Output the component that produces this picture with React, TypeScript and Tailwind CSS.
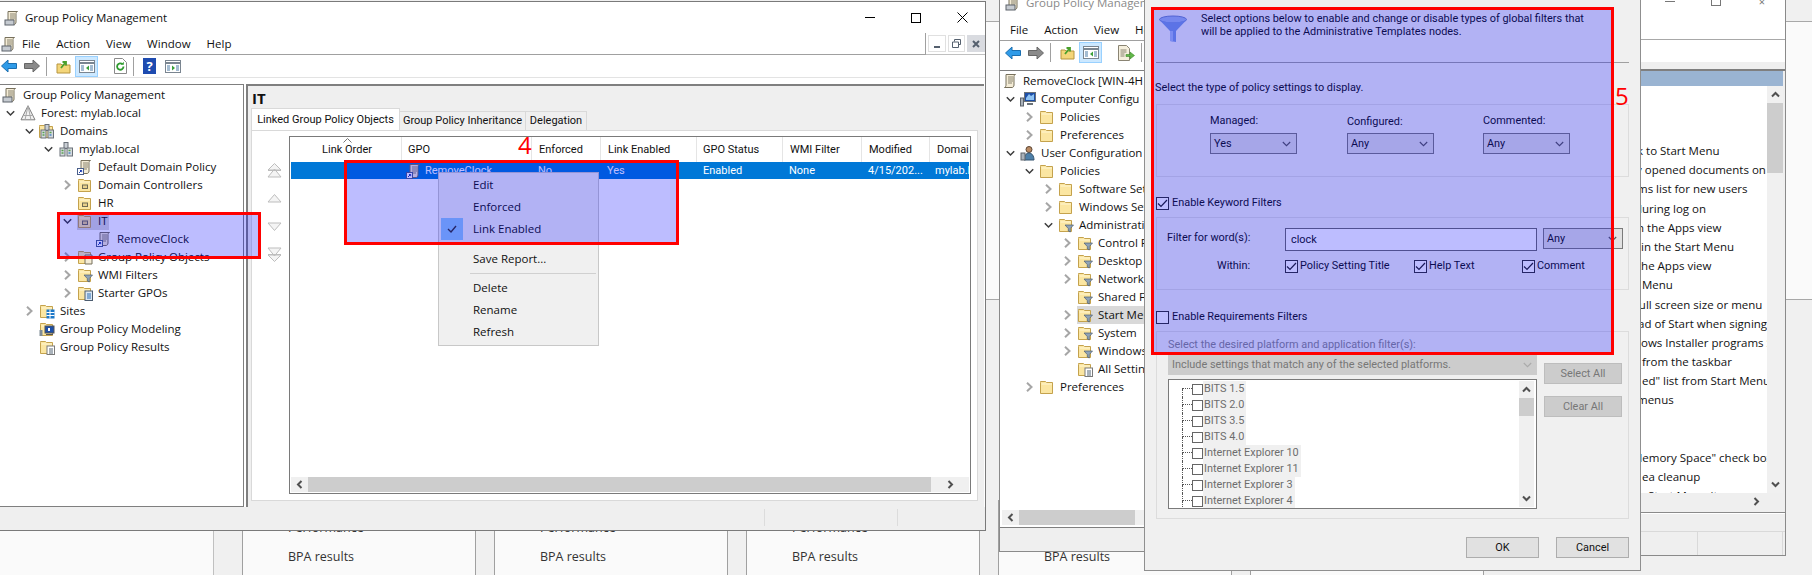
import React from 'react';

// little hand drawn windows icons
function Scroll({ tool = false, link = false }: { tool?: boolean; link?: boolean }) {
  return (
    <svg width="16" height="16" viewBox="0 0 16 16" className="shrink-0">
      <path d="M4 1.5h9.5c-1 .5-1.5 1-1.5 2V12c0 1.5-1 2.5-2 2.5H2.5C3.5 14 4 13 4 12z" fill="#f4ecd6" stroke="#77705c" />
      <path d="M6 4h5M6 6h5M6 8h5M6 10h4" stroke="#8a8573" />
      {tool && <rect x="1" y="10" width="9" height="5" fill="#c6cbd1" stroke="#5c636b" />}
      {link && (
        <g>
          <rect x="0.5" y="9.5" width="6" height="6" fill="#fff" stroke="#4a5f8a" />
          <path d="M2 14l2.5-2.5M3 11.5h1.7v1.7" stroke="#1f3fb0" fill="none" />
        </g>
      )}
    </svg>
  );
}

function Folder({ kind }: { kind?: 'ou' | 'filter' | 'gpo' | 'wmi' | 'starter' | 'sites' | 'model' | 'results' | 'all' }) {
  return (
    <svg width="16" height="16" viewBox="0 0 16 16" className="shrink-0">
      <path d="M1.5 3.5v-1h5l1 1h6v11h-12z" fill="#fbe6a2" stroke="#c4a24d" />
      <path d="M2.5 5h10.5" stroke="#fff6d2" />
      {kind === 'ou' && <rect x="5.5" y="8" width="5" height="3.5" fill="#e8d08a" stroke="#6d6a55" />}
      {(kind === 'filter' || kind === 'wmi') && <path d="M7 8h8.5l-3.2 3.6V15l-2-1v-2.4z" fill="#8fa3b8" stroke="#4c5c6f" strokeWidth="0.7" />}
      {kind === 'gpo' && <path d="M8 6h7v9H8z" fill="#f4ecd6" stroke="#77705c" />}
      {kind === 'starter' && (
        <g>
          <rect x="8" y="6" width="7.5" height="9.5" fill="#dbe7f3" stroke="#4c5c6f" />
          <path d="M10 9h4M10 11h4M10 13h4" stroke="#2a6fb5" />
        </g>
      )}
      {kind === 'sites' && (
        <g>
          <rect x="7.5" y="6.5" width="8" height="9" fill="#1c78c8" />
          <path d="M7.5 9.5h8M7.5 12.5h8M11 6.5v9" stroke="#fff" />
        </g>
      )}
      {kind === 'model' && (
        <g>
          <rect x="0.5" y="9" width="3" height="6" fill="#7f8b96" />
          <rect x="6" y="5" width="9" height="7" fill="#1c4fa8" stroke="#555" />
          <path d="M7 13.5h7" stroke="#555" />
          <rect x="9" y="7" width="2" height="3" fill="#fff" />
        </g>
      )}
      {(kind === 'results' || kind === 'all') && (
        <g>
          <rect x="8" y="7" width="7.5" height="8.5" fill="#fff" stroke="#7a7a7a" />
          <path d="M10 10h4M10 12h4M10 14h4" stroke="#567" />
        </g>
      )}
    </svg>
  );
}

function Forest() {
  return (
    <svg width="16" height="16" viewBox="0 0 16 16" className="shrink-0">
      <path d="M8 .8l7 14H1z" fill="#f2f2f2" stroke="#7d7d7d" />
      <path d="M8 .8L5 15M8 .8l3 14.2M3.5 10.5h9" stroke="#a8a8a8" fill="none" />
    </svg>
  );
}

function Building({ folder = false }: { folder?: boolean }) {
  return (
    <svg width="16" height="16" viewBox="0 0 16 16" className="shrink-0">
      {folder && <path d="M.5 3.5v-1h5l1 1h7v11H.5z" fill="#fbe6a2" stroke="#c4a24d" />}
      <rect x="6" y="1.5" width="4" height="6" fill="#c9ced4" stroke="#6a7178" />
      <rect x="2" y="7" width="5" height="8" fill="#d5dade" stroke="#6a7178" />
      <rect x="9" y="7" width="5.5" height="8" fill="#d5dade" stroke="#6a7178" />
      <path d="M3.5 9.5h2M3.5 12h2M10.5 9.5h2" stroke="#59a14f" strokeWidth="1.4" />
      <path d="M10.5 12h2" stroke="#3f7fc2" strokeWidth="1.4" />
    </svg>
  );
}

function Pc() {
  return (
    <svg width="16" height="16" viewBox="0 0 16 16" className="shrink-0">
      <rect x="0.5" y="7" width="3" height="8" fill="#aab2ba" stroke="#5c636b" />
      <rect x="4.5" y="1.5" width="11" height="9" fill="#1c4fa8" stroke="#6a7178" />
      <path d="M6 7l3-4 2 2 3-2v6H6z" fill="#8fc3f2" />
      <path d="M7 13h6" stroke="#6a7178" strokeWidth="2" />
    </svg>
  );
}

function User() {
  return (
    <svg width="16" height="16" viewBox="0 0 16 16" className="shrink-0">
      <circle cx="9" cy="4.5" r="3" fill="#b98a63" stroke="#5b4534" />
      <path d="M4 15c0-4 2-7 5-7s5 3 5 7z" fill="#4d7fa8" stroke="#33536e" />
      <rect x="1" y="8" width="4" height="7" fill="#aab2ba" stroke="#5c636b" />
    </svg>
  );
}

function Open() {
  return (
    <svg width="9" height="9" viewBox="0 0 9 9" className="shrink-0">
      <path d="M.8 2.2L4.5 6 8.2 2.2" fill="none" stroke="#3c3c3c" strokeWidth="1.5" />
    </svg>
  );
}

function Closed() {
  return (
    <svg width="9" height="10" viewBox="0 0 9 10" className="shrink-0">
      <path d="M2 .8L6.5 5 2 9.2" fill="none" stroke="#a6a6a6" strokeWidth="2" />
    </svg>
  );
}

const pad = ['pl-[2px]', 'pl-[5px]', 'pl-[24px]', 'pl-[43px]', 'pl-[62px]', 'pl-[81px]'];

type TreeItem = {
  label: string;
  level: number;
  icon: React.ReactNode;
  state?: 'open' | 'closed';
  selected?: boolean;
};

function TreeRow({ item, selectClass }: { item: TreeItem; selectClass?: string }) {
  return (
    <div className={`flex h-[18px] items-center whitespace-nowrap ${pad[item.level]}`}>
      {item.level > 0 && (
        <span className="flex w-[15px] shrink-0 items-center pl-[1px]">
          {item.state === 'open' && <Open />}
          {item.state === 'closed' && <Closed />}
        </span>
      )}
      <span className={`flex h-[18px] items-center gap-[5px] ${item.selected ? selectClass : ''}`}>
        {item.icon}
        <span>{item.label}</span>
      </span>
    </div>
  );
}

const gpmcTree: TreeItem[] = [
  { label: 'Group Policy Management', level: 0, icon: <Scroll tool /> },
  { label: 'Forest: mylab.local', level: 1, state: 'open', icon: <Forest /> },
  { label: 'Domains', level: 2, state: 'open', icon: <Building folder /> },
  { label: 'mylab.local', level: 3, state: 'open', icon: <Building /> },
  { label: 'Default Domain Policy', level: 4, icon: <Scroll link /> },
  { label: 'Domain Controllers', level: 4, state: 'closed', icon: <Folder kind="ou" /> },
  { label: 'HR', level: 4, icon: <Folder kind="ou" /> },
  { label: 'IT', level: 4, state: 'open', selected: true, icon: <Folder kind="ou" /> },
  { label: 'RemoveClock', level: 5, icon: <Scroll link /> },
  { label: 'Group Policy Objects', level: 4, state: 'closed', icon: <Folder kind="gpo" /> },
  { label: 'WMI Filters', level: 4, state: 'closed', icon: <Folder kind="wmi" /> },
  { label: 'Starter GPOs', level: 4, state: 'closed', icon: <Folder kind="starter" /> },
  { label: 'Sites', level: 2, state: 'closed', icon: <Folder kind="sites" /> },
  { label: 'Group Policy Modeling', level: 2, icon: <Folder kind="model" /> },
  { label: 'Group Policy Results', level: 2, icon: <Folder kind="results" /> },
];

const editorTree: TreeItem[] = [
  { label: 'RemoveClock [WIN-4H', level: 0, icon: <Scroll /> },
  { label: 'Computer Configu', level: 1, state: 'open', icon: <Pc /> },
  { label: 'Policies', level: 2, state: 'closed', icon: <Folder /> },
  { label: 'Preferences', level: 2, state: 'closed', icon: <Folder /> },
  { label: 'User Configuration', level: 1, state: 'open', icon: <User /> },
  { label: 'Policies', level: 2, state: 'open', icon: <Folder /> },
  { label: 'Software Settings', level: 3, state: 'closed', icon: <Folder /> },
  { label: 'Windows Settings', level: 3, state: 'closed', icon: <Folder /> },
  { label: 'Administrative', level: 3, state: 'open', icon: <Folder kind="filter" /> },
  { label: 'Control Panel', level: 4, state: 'closed', icon: <Folder kind="filter" /> },
  { label: 'Desktop', level: 4, state: 'closed', icon: <Folder kind="filter" /> },
  { label: 'Network', level: 4, state: 'closed', icon: <Folder kind="filter" /> },
  { label: 'Shared Folders', level: 4, icon: <Folder kind="filter" /> },
  { label: 'Start Menu and', level: 4, state: 'closed', selected: true, icon: <Folder kind="filter" /> },
  { label: 'System', level: 4, state: 'closed', icon: <Folder kind="filter" /> },
  { label: 'Windows Comp', level: 4, state: 'closed', icon: <Folder kind="filter" /> },
  { label: 'All Settings', level: 4, icon: <Folder kind="all" /> },
  { label: 'Preferences', level: 2, state: 'closed', icon: <Folder /> },
];

function Back() {
  return (
    <svg width="16" height="14" viewBox="0 0 16 14">
      <path d="M.5 7L7 1v3.5h8.5v5H7V13z" fill="#2f9be8" stroke="#1b6fb0" />
    </svg>
  );
}

function Forward() {
  return (
    <svg width="16" height="14" viewBox="0 0 16 14">
      <path d="M15.5 7L9 1v3.5H.5v5H9V13z" fill="#8a8a8a" stroke="#666" />
    </svg>
  );
}

function UpFolder() {
  return (
    <svg width="15" height="15" viewBox="0 0 15 15">
      <path d="M1 14V5h4l1 1h8v8z" fill="#f4d67a" stroke="#b7953f" />
      <path d="M5 9l4-5M6.5 3H10v3.5" fill="none" stroke="#4aa02c" strokeWidth="1.8" />
    </svg>
  );
}

function Console({ play = false }: { play?: boolean }) {
  return (
    <svg width="16" height="13" viewBox="0 0 16 13">
      <rect x="0.5" y="0.5" width="15" height="12" fill="#fff" stroke="#7a8590" />
      <path d="M.5 3h15" stroke="#7a8590" strokeWidth="2" />
      <path d="M2 6h3M2 8h3M2 10h3M11 6h3M11 8h3M11 10h3" stroke="#4a7aa5" />
      <path d={play ? 'M7 5.5l3 2.5-3 2.5z' : 'M10 5.5L7 8l3 2.5z'} fill="#3aa03a" />
    </svg>
  );
}

function Refresh() {
  return (
    <svg width="13" height="16" viewBox="0 0 13 16">
      <path d="M.5.5h8l4 4v11H.5z" fill="#fff" stroke="#8a8a8a" />
      <path d="M9.5 8.5a3.2 3.2 0 1 1-1-2.3" fill="none" stroke="#2f9b2f" strokeWidth="1.8" />
      <path d="M9.8 3.8v3H7z" fill="#2f9b2f" />
    </svg>
  );
}

function Export() {
  return (
    <svg width="17" height="16" viewBox="0 0 17 16">
      <path d="M.5.5h8l3 3v12H.5z" fill="#f5efdd" stroke="#8a8473" />
      <path d="M2.5 5h6M2.5 7h6M2.5 9h4M2.5 11h4" stroke="#8a8473" />
      <path d="M8 9.5h4v-2.5l4.5 3.5-4.5 3.5v-2.5H8z" fill="#62b84a" stroke="#3f8a2c" strokeWidth="0.6" />
    </svg>
  );
}

function MiniBar() {
  return <span className="mx-[6px] h-[19px] w-px bg-[#a0a0a0]" />;
}

function ActiveTool({ children }: { children: React.ReactNode }) {
  return (
    <span className="flex h-[21px] w-[23px] items-center justify-center border border-[#99d1ff] bg-[#cce8ff]">
      {children}
    </span>
  );
}

function GroupPolicyWindow() {
  const columns = [
    ['GPO', 'pl-[6px]'],
    ['Enforced', 'pl-[7px]'],
    ['Link Enabled', 'pl-[7px]'],
    ['GPO Status', 'pl-[6px]'],
    ['WMI Filter', 'pl-[7px]'],
    ['Modified', 'pl-[7px]'],
    ['Domain', 'pl-[7px]'],
  ];
  const cells = [
    ['No', 'pl-[7px]'],
    ['Yes', 'pl-[7px]'],
    ['Enabled', 'pl-[7px]'],
    ['None', 'pl-[7px]'],
    ['4/15/202...', 'pl-[7px]'],
    ['mylab.local', 'pl-[6px]'],
  ];

  return (
    <div className="absolute left-0 top-[1px] flex h-[530px] w-[986px] flex-col border-y border-r border-[#7a7a7a] bg-white">
      {/* Title bar */}
      <div className="flex h-[31px] items-center justify-between pl-[4px]">
        <div className="flex items-center gap-[5px]">
          <Scroll tool />
          <span>Group Policy Management</span>
        </div>
        <div className="flex items-center">
          <span className="flex w-[46px] justify-center"><span className="h-px w-[10px] bg-black" /></span>
          <span className="flex w-[46px] justify-center"><span className="size-[10px] border border-black" /></span>
          <span className="flex w-[46px] justify-center">
            <svg width="11" height="11" viewBox="0 0 11 11"><path d="M.5.5l10 10M10.5.5l-10 10" stroke="#000" /></svg>
          </span>
        </div>
      </div>

      {/* Menu */}
      <div className="flex h-[22px] items-stretch">
        <div className="flex flex-1 items-center border-b border-r border-[#a0a0a0] pl-[1px]">
          <Scroll tool />
          <div className="ml-[5px] flex gap-[16px]">
            <span>File</span>
            <span>Action</span>
            <span>View</span>
            <span>Window</span>
            <span>Help</span>
          </div>
        </div>
        <div className="flex w-[59px] items-center gap-[2px] border-b border-[#c0c0c0] pl-[2px]">
          <span className="flex h-[17px] w-[18px] items-end justify-center border border-[#e0e0e0] pb-[3px]"><span className="h-[2px] w-[6px] bg-[#55606e]" /></span>
          <span className="flex h-[17px] w-[18px] items-center justify-center border border-[#e0e0e0]">
            <svg width="9" height="9" viewBox="0 0 9 9"><path d="M2.5 2.5V.5h6v5h-2M.5 3h6v5.5h-6z" fill="none" stroke="#55606e" /></svg>
          </span>
          <span className="flex h-[17px] w-[18px] items-center justify-center bg-[#d9dbe0]">
            <svg width="8" height="8" viewBox="0 0 8 8"><path d="M1 1l6 6M7 1L1 7" stroke="#55606e" strokeWidth="2" /></svg>
          </span>
        </div>
      </div>

      {/* Toolbar */}
      <div className="flex h-[23px] items-center border-b border-[#e3e3e3] pl-[1px]">
        <Back />
        <span className="ml-[7px]"><Forward /></span>
        <MiniBar />
        <span className="ml-[3px] mr-[4px]"><UpFolder /></span>
        <ActiveTool><Console /></ActiveTool>
        <span className="ml-[1px]"><MiniBar /></span>
        <span className="ml-[3px]"><Refresh /></span>
        <MiniBar />
        <span className="ml-[3px] flex h-[16px] w-[13px] items-center justify-center bg-[#1e4bb0] text-[13px] font-bold leading-none text-white">?</span>
        <span className="ml-[9px]"><Console play /></span>
      </div>

      {/* Panes */}
      <div className="mt-[6px] flex h-[423px]">
        <div className="w-[244px] border-y border-r border-[#7f7f7f] pt-[1px]">
          {gpmcTree.map((item) => (
            <TreeRow key={item.label} item={item} selectClass="bg-[#d9d9d9] pr-[1px]" />
          ))}
        </div>
        <div className="ml-[2px] flex w-[738px] flex-col border-l-2 border-t-2 border-[#7f7f7f] bg-[#efefef]">
          <div className="h-[22px] pl-[4px] pt-[2px] text-[15px] font-bold leading-[20px]">IT</div>
          <div className="ml-[3px] flex h-[22px] items-end whitespace-nowrap text-[11px] [font-family:Roboto,sans-serif]">
            <div className="flex h-[22px] w-[149px] items-center justify-center border-x border-t border-[#d9d9d9] bg-white">Linked Group Policy Objects</div>
            <div className="flex h-[19px] w-[126px] items-center justify-center border-r border-t border-[#d9d9d9]">Group Policy Inheritance</div>
            <div className="flex h-[19px] w-[61px] items-center justify-center border-r border-t border-[#d9d9d9]">Delegation</div>
          </div>
          <div className="ml-[3px] flex h-[371px] w-[727px] border border-[#d9d9d9] bg-white pt-[5px]">
            {/* Move buttons */}
            <div className="flex w-[37px] flex-col items-center pl-[8px]">
              <svg width="15" height="15" viewBox="0 0 15 15" className="mt-[27px]">
                <path d="M7.5.5L14 7H1zM7.5 6L14 14H1z" fill="#f4f4f4" stroke="#bdbdbd" />
                <path d="M1 7.5h13" stroke="#bdbdbd" />
              </svg>
              <svg width="15" height="9" viewBox="0 0 15 9" className="mt-[16px]">
                <path d="M7.5.5L14 8H1z" fill="#f4f4f4" stroke="#bdbdbd" />
              </svg>
              <svg width="15" height="9" viewBox="0 0 15 9" className="mt-[19px]">
                <path d="M7.5 8.5L14 1H1z" fill="#f4f4f4" stroke="#bdbdbd" />
              </svg>
              <svg width="15" height="15" viewBox="0 0 15 15" className="mt-[16px]">
                <path d="M7.5 14.5L14 8H1zM7.5 9L14 1H1z" fill="#f4f4f4" stroke="#bdbdbd" />
                <path d="M1 7.5h13" stroke="#bdbdbd" />
              </svg>
            </div>
            {/* Links grid */}
            <div className="flex h-[358px] w-[682px] flex-col border border-[#7a7a7a] px-px text-[11px] [font-family:Roboto,sans-serif]">
              <div className="relative grid h-[25px] grid-cols-[110px_130px_69px_96px_86px_79px_68px_40px] items-center">
                <span className="pl-[2px] text-center">Link Order</span>
                <svg width="9" height="5" viewBox="0 0 9 5" className="absolute left-[52px] top-[1px]">
                  <path d="M.5 4.5L4.5.5l4 4" fill="none" stroke="#777" />
                </svg>
                {columns.map(([name, cls]) => (
                  <span key={name} className={`flex h-full items-center overflow-hidden whitespace-nowrap border-l border-[#e5e5e5] ${cls}`}>{name}</span>
                ))}
              </div>
              <div className="grid h-[17px] grid-cols-[110px_130px_69px_96px_86px_79px_68px_40px] items-center overflow-hidden bg-[#0078d7] text-white">
                <span />
                <span className="flex items-center gap-[3px] pl-[5px]">
                  <Scroll link />
                  <span>RemoveClock</span>
                </span>
                {cells.map(([value, cls]) => (
                  <span key={value} className={`overflow-hidden whitespace-nowrap ${cls}`}>{value}</span>
                ))}
              </div>
              <div className="flex-1" />
              <div className="mb-px flex h-[15px] items-center bg-[#f0f0f0]">
                <span className="flex w-[17px] justify-center">
                  <svg width="7" height="9" viewBox="0 0 7 9"><path d="M5.5 1L2 4.5 5.5 8" fill="none" stroke="#505050" strokeWidth="2" /></svg>
                </span>
                <span className="h-full w-[623px] bg-[#cdcdcd]" />
                <span className="flex flex-1 justify-center">
                  <svg width="7" height="9" viewBox="0 0 7 9"><path d="M1.5 1L5 4.5 1.5 8" fill="none" stroke="#505050" strokeWidth="2" /></svg>
                </span>
              </div>
            </div>
          </div>
        </div>
      </div>

      {/* Status bar */}
      <div className="flex flex-1 bg-[#efefef]">
        <span className="flex-1" />
        <span className="mt-[2px] h-[17px] w-[133px] border-l border-[#dcdcdc]" />
        <span className="mt-[2px] h-[17px] w-[88px] border-l border-[#dcdcdc]" />
      </div>

      {/* Context menu */}
      <div className="absolute left-[438px] top-[170px] h-[174px] w-[161px] border border-[#c8c8c8] bg-[#f0f0f0] pl-[34px] pt-px">
        <div className="flex h-[22px] items-center">Edit</div>
        <div className="flex h-[22px] items-center">Enforced</div>
        <div className="relative flex h-[22px] items-center">
          <span className="absolute left-[-32px] top-0 flex h-[22px] w-[22px] items-center justify-center bg-[#90c8f6]">
            <svg width="10" height="8" viewBox="0 0 10 8"><path d="M1 4l3 3 5-6" fill="none" stroke="#333" strokeWidth="1.4" /></svg>
          </span>
          Link Enabled
        </div>
        <div className="mt-[8px] flex h-[22px] items-center">Save Report...</div>
        <div className="ml-[-3px] mr-[2px] mt-[3px] h-px bg-[#d0d0d0]" />
        <div className="mt-[3px] flex h-[22px] items-center">Delete</div>
        <div className="flex h-[22px] items-center">Rename</div>
        <div className="flex h-[22px] items-center">Refresh</div>
      </div>
    </div>
  );
}

function EditorWindow() {
  return (
    <div className="absolute left-[999px] top-[-14px] flex h-[566px] w-[642px] flex-col border-x border-b border-[#8a8a8a] bg-white">
      <div className="flex h-[34px] items-center gap-[5px] pl-[5px] text-[#8a8a8a]">
        <Scroll tool />
        <span>Group Policy Management Editor</span>
      </div>
      <div className="flex h-[21px] items-center gap-[16px] border-b border-[#a0a0a0] pl-[10px]">
        <span>File</span>
        <span>Action</span>
        <span>View</span>
        <span>Help</span>
      </div>
      <div className="flex h-[23px] items-center pl-[5px]">
        <Back />
        <span className="ml-[7px]"><Forward /></span>
        <MiniBar />
        <span className="ml-[3px] mr-[4px]"><UpFolder /></span>
        <ActiveTool><Console /></ActiveTool>
        <span className="ml-[1px]"><MiniBar /></span>
        <span className="ml-[3px]"><Export /></span>
        <MiniBar />
      </div>
      <div className="mt-[6px] flex h-[458px] w-full flex-col border-y border-[#7f7f7f]">
        <div className="flex-1 pt-[1px]">
          {editorTree.map((item, i) => (
            <TreeRow key={i} item={item} selectClass="w-[70px] overflow-hidden bg-[#d9d9d9]" />
          ))}
        </div>
        <div className="mx-[2px] mb-[2px] flex h-[15px] items-center bg-[#f0f0f0]">
          <span className="flex w-[17px] justify-center">
            <svg width="7" height="9" viewBox="0 0 7 9"><path d="M5.5 1L2 4.5 5.5 8" fill="none" stroke="#505050" strokeWidth="2" /></svg>
          </span>
          <span className="h-full w-[116px] bg-[#cdcdcd]" />
        </div>
      </div>
      <div className="flex-1 bg-[#efefef]" />
    </div>
  );
}

// pane peeking out to the right of the filter dialog
const settingRows: [string, string][] = [
  ['k to Start Menu', 'pl-[5px]'],
  ['y opened documents on', 'pl-[4px]'],
  ['ms list for new users', 'pl-[5px]'],
  ['during log on', 'pl-[3px]'],
  ['n the Apps view', 'pl-[5px]'],
  ['in the Start Menu', 'pl-[9px]'],
  ['the Apps view', 'pl-[5px]'],
  ['Menu', 'pl-[10px]'],
  ['full screen size or menu', 'pl-[3px]'],
  ['ad of Start when signing', 'pl-[6px]'],
  ['ows Installer programs St', 'pl-[9px]'],
  ['from the taskbar', 'pl-[10px]'],
  ['ed" list from Start Menu', 'pl-[10px]'],
  ['menus', 'pl-[5px]'],
  ['', ''],
  ['', ''],
  ['Memory Space" check box', 'pl-[0px]'],
  ['ea cleanup', 'pl-[10px]'],
  ['Start Menu items', 'pl-[16px]'],
];

function SettingsWindow() {
  return (
    <div className="absolute left-[1632px] top-0 flex h-[556px] w-[154px] flex-col border-b border-r border-[#8a8a8a] bg-white">
      <div className="flex h-[40px] items-start justify-end border-b border-[#a8a8a8]">
        <span className="mr-[36px] mt-[1px] h-px w-[10px] bg-[#777]" />
        <span className="mr-[36px] h-[6px] w-[10px] border-x border-b border-[#777]" />
        <span className="mr-[18px] h-[6px] w-[10px] text-center text-[11px] leading-[3px] text-[#777]">×</span>
      </div>
      <div className="h-[22px]" />
      <div className="h-[9px] border-b-2 border-[#7f7f7f] bg-[#efefef]" />
      <div className="flex h-[441px] flex-col bg-[#efefef] pr-[2px]">
        <div className="h-[15px] bg-[#9ab4d2]" />
        <div className="flex h-[407px]">
          <div className="w-[135px] overflow-hidden bg-white pt-[55px] text-[11.5px]">
            {settingRows.map(([text, cls], i) => (
              <div key={i} className={`h-[19.2px] whitespace-nowrap leading-[19.2px] ${cls}`}>{text}</div>
            ))}
          </div>
          <div className="flex w-[16px] flex-col bg-[#f0f0f0]">
            <span className="flex h-[17px] items-center justify-center">
              <svg width="9" height="7" viewBox="0 0 9 7"><path d="M1 5.5L4.5 2 8 5.5" fill="none" stroke="#505050" strokeWidth="2" /></svg>
            </span>
            <span className="h-[70px] bg-[#cdcdcd]" />
            <span className="flex-1" />
            <span className="flex h-[17px] items-center justify-center">
              <svg width="9" height="7" viewBox="0 0 9 7"><path d="M1 1.5L4.5 5 8 1.5" fill="none" stroke="#505050" strokeWidth="2" /></svg>
            </span>
          </div>
        </div>
        <div className="flex h-[16px] items-center justify-end pr-[23px]">
          <svg width="7" height="9" viewBox="0 0 7 9"><path d="M1.5 1L5 4.5 1.5 8" fill="none" stroke="#505050" strokeWidth="2" /></svg>
        </div>
      </div>
      <div className="mb-[1px] h-[1px] bg-[#8a8a8a]" />
      <div className="h-[18px] border-b border-[#d9d9d9] bg-[#efefef]" />
      <div className="flex flex-1 justify-end bg-[#efefef]">
        <span className="w-[86px] border-x border-[#d9d9d9]" />
        <span className="w-[2px]" />
      </div>
    </div>
  );
}

function Check({ on = false }: { on?: boolean }) {
  return (
    <span className="flex size-[13px] shrink-0 items-center justify-center border border-[#333] bg-white">
      {on && (
        <svg width="11" height="9" viewBox="0 0 11 9"><path d="M1 4.5l3 3 6-6.5" fill="none" stroke="#222" strokeWidth="1.2" /></svg>
      )}
    </span>
  );
}

function DropDown({ value, width }: { value: string; width: string }) {
  return (
    <div className={`flex h-[21px] items-center justify-between border border-[#7a7a7a] bg-[#e1e1e1] pl-[3px] pr-[5px] ${width}`}>
      <span>{value}</span>
      <svg width="9" height="6" viewBox="0 0 9 6"><path d="M.8 1L4.5 4.7 8.2 1" fill="none" stroke="#555" strokeWidth="1.1" /></svg>
    </div>
  );
}

function FilterDialog() {
  const platforms = [
    'BITS 1.5',
    'BITS 2.0',
    'BITS 3.5',
    'BITS 4.0',
    'Internet Explorer 10',
    'Internet Explorer 11',
    'Internet Explorer 3',
    'Internet Explorer 4',
  ];

  return (
    <div className="absolute left-[1144px] top-0 h-[571px] w-[497px] border-x border-b border-[#8f8f8f] bg-[#f0f0f0] text-[10.9px] [font-family:Roboto,sans-serif]">
      <div className="mx-[11px] flex h-[63px] border-b border-[#a0a0a0]">
        <svg width="30" height="28" viewBox="0 0 30 28" className="ml-[2px] mt-[15px] shrink-0">
          <ellipse cx="15" cy="4.5" rx="13.5" ry="3.5" fill="#9fb6e8" stroke="#6d86c4" />
          <path d="M1.5 5L12 16v10l6 1V16L28.5 5c-3 3-24 3-27 0z" fill="#7d9cdd" />
          <path d="M12 16v10l3 .5V16z" fill="#a7bcec" />
        </svg>
        <div className="ml-[13px] pt-[12px] leading-[13px]">
          <div className="whitespace-nowrap">Select options below to enable and change or disable types of global filters that</div>
          <div className="whitespace-nowrap">will be applied to the Administrative Templates nodes.</div>
        </div>
      </div>

      <div className="ml-[10px] mt-[18px] h-[14px] leading-[14px]">Select the type of policy settings to display.</div>

      <div className="mx-[11px] mt-[9px] flex h-[73px] border border-[#dcdcdc] pl-[53px] pt-[9px]">
        <div className="w-[137px]">
          <div className="h-[14px] leading-[14px]">Managed:</div>
          <div className="mt-[5px]"><DropDown value="Yes" width="w-[87px]" /></div>
        </div>
        <div className="w-[136px]">
          <div className="h-[14px] leading-[16px]">Configured:</div>
          <div className="mt-[5px]"><DropDown value="Any" width="w-[87px]" /></div>
        </div>
        <div>
          <div className="h-[14px] leading-[14px]">Commented:</div>
          <div className="mt-[5px]"><DropDown value="Any" width="w-[87px]" /></div>
        </div>
      </div>

      <div className="ml-[11px] mt-[19px] flex h-[14px] items-center gap-[3px]">
        <Check on />
        Enable Keyword Filters
      </div>

      <div className="mx-[11px] mt-[7px] h-[73px] border border-[#dcdcdc] pt-[10px]">
        <div className="flex h-[23px]">
          <span className="w-[128px] pl-[10px] leading-[20px]">Filter for word(s):</span>
          <span className="flex h-[23px] w-[252px] items-center border border-[#6b6b6b] bg-white pl-[5px]">clock</span>
          <span className="ml-[6px]"><DropDown value="Any" width="w-[80px]" /></span>
        </div>
        <div className="mt-[8px] flex h-[14px] items-center">
          <span className="w-[128px] pl-[60px]">Within:</span>
          <span className="flex w-[129px] items-center gap-[2px]"><Check on />Policy Setting Title</span>
          <span className="flex w-[108px] items-center gap-[2px]"><Check on />Help Text</span>
          <span className="flex items-center gap-[2px]"><Check on />Comment</span>
        </div>
      </div>

      <div className="ml-[11px] mt-[20px] flex h-[14px] items-center gap-[3px]">
        <Check />
        Enable Requirements Filters
      </div>

      <div className="mx-[11px] mt-[7px] h-[188px] border border-[#dcdcdc] pl-[11px] pt-[6px]">
        <div className="h-[14px] leading-[14px] text-[#8a8a8a]">Select the desired platform and application filter(s):</div>
        <div className="flex">
          <div className="w-[369px]">
            <div className="mt-[3px] flex h-[20px] items-center justify-between bg-[#cccccc] pl-[4px] pr-[5px] text-[#777]">
              <span>Include settings that match any of the selected platforms.</span>
              <svg width="9" height="6" viewBox="0 0 9 6"><path d="M.8 1L4.5 4.7 8.2 1" fill="none" stroke="#aaa" strokeWidth="1.1" /></svg>
            </div>
            <div className="mt-[4px] flex h-[130px] border border-[#7a7a7a] bg-white">
              <div className="flex-1 overflow-hidden pl-[13px] pt-px">
                {platforms.map((name, i) => (
                  <div key={name} className="flex h-[16px] items-center">
                    <span className="flex h-[16px] w-[10px] shrink-0 flex-col">
                      <span className={`h-[8px] border-b border-dotted border-[#555] ${i === 0 ? '' : 'border-l'}`} />
                      <span className="h-[8px] border-l border-dotted border-[#555]" />
                    </span>
                    <span className="size-[11px] shrink-0 border border-[#666]" />
                    <span className="flex h-[16px] items-center whitespace-nowrap bg-[#f0f0f0] pl-px pr-[2px] text-[#6d6d6d]">{name}</span>
                  </div>
                ))}
              </div>
              <div className="my-[1px] mr-[2px] flex w-[15px] flex-col bg-[#f0f0f0]">
                <span className="flex h-[17px] items-center justify-center">
                  <svg width="9" height="7" viewBox="0 0 9 7"><path d="M1 5.5L4.5 2 8 5.5" fill="none" stroke="#505050" strokeWidth="2" /></svg>
                </span>
                <span className="h-[18px] bg-[#cdcdcd]" />
                <span className="flex-1" />
                <span className="flex h-[17px] items-center justify-center">
                  <svg width="9" height="7" viewBox="0 0 9 7"><path d="M1 1.5L4.5 5 8 1.5" fill="none" stroke="#505050" strokeWidth="2" /></svg>
                </span>
              </div>
            </div>
          </div>
          <div className="ml-[7px] mt-[11px] w-[78px]">
            <div className="flex h-[21px] items-center justify-center border border-[#bdbdbd] bg-[#cccccc] text-[#777]">Select All</div>
            <div className="mt-[12px] flex h-[21px] items-center justify-center border border-[#bdbdbd] bg-[#cccccc] text-[#777]">Clear All</div>
          </div>
        </div>
      </div>

      <div className="mr-[11px] mt-[18px] flex justify-end gap-[17px]">
        <div className="flex h-[21px] w-[73px] items-center justify-center border border-[#adadad] bg-[#e1e1e1]">OK</div>
        <div className="flex h-[21px] w-[73px] items-center justify-center border border-[#adadad] bg-[#e1e1e1]">Cancel</div>
      </div>
    </div>
  );
}

function Backdrop() {
  return (
    <div className="absolute inset-0 bg-[#f0f0f0]">
      <div className="mt-[21px] h-[279px] border-y border-[#a8a8a8] bg-[#fafafa]" />
      <div className="absolute left-0 top-[500px] flex h-[75px] gap-[18px]">
        <div className="mr-[10px] h-full w-[214px] shrink-0 border-r border-[#c0c0c0] bg-[#fafafa]" />
        {[0, 1, 2, 3, 4].map((i) => (
          <div key={i} className="h-full w-[234px] shrink-0 border-x border-[#a0a0a0] bg-[#fafafa] pl-[45px] pt-[19px] text-[12.5px] text-[#333]">
            <div className="h-[29px] leading-[18px]">Performance</div>
            <div className="leading-[18px]">BPA results</div>
          </div>
        ))}
      </div>
    </div>
  );
}

export default function App() {
  return (
    <div className="relative h-[575px] w-[1812px] overflow-hidden text-[11.5px] leading-[16px] text-[#111] [font-family:'Open_Sans',sans-serif]">
      <Backdrop />
      <SettingsWindow />
      <EditorWindow />
      <GroupPolicyWindow />
      <FilterDialog />

      {/* Red callouts drawn over the screenshot */}
      <div className="absolute left-[57px] top-[212px] h-[47px] w-[204px] border-[3px] border-[#ff0000] bg-[rgba(0,0,255,0.26)]" />
      <div className="absolute left-[344px] top-[160px] h-[85px] w-[335px] border-[3px] border-[#ff0000] bg-[rgba(0,0,255,0.26)]" />
      <div className="absolute left-[1151px] top-[7px] h-[348px] w-[463px] border-[3px] border-[#ff0000] bg-[rgba(0,0,255,0.26)]" />
      <span className="absolute left-[518px] top-[130px] text-[24px] leading-[30px] text-[#ff0000]">4</span>
      <span className="absolute left-[1615px] top-[81px] text-[24px] leading-[30px] text-[#ff0000]">5</span>
    </div>
  );
}
